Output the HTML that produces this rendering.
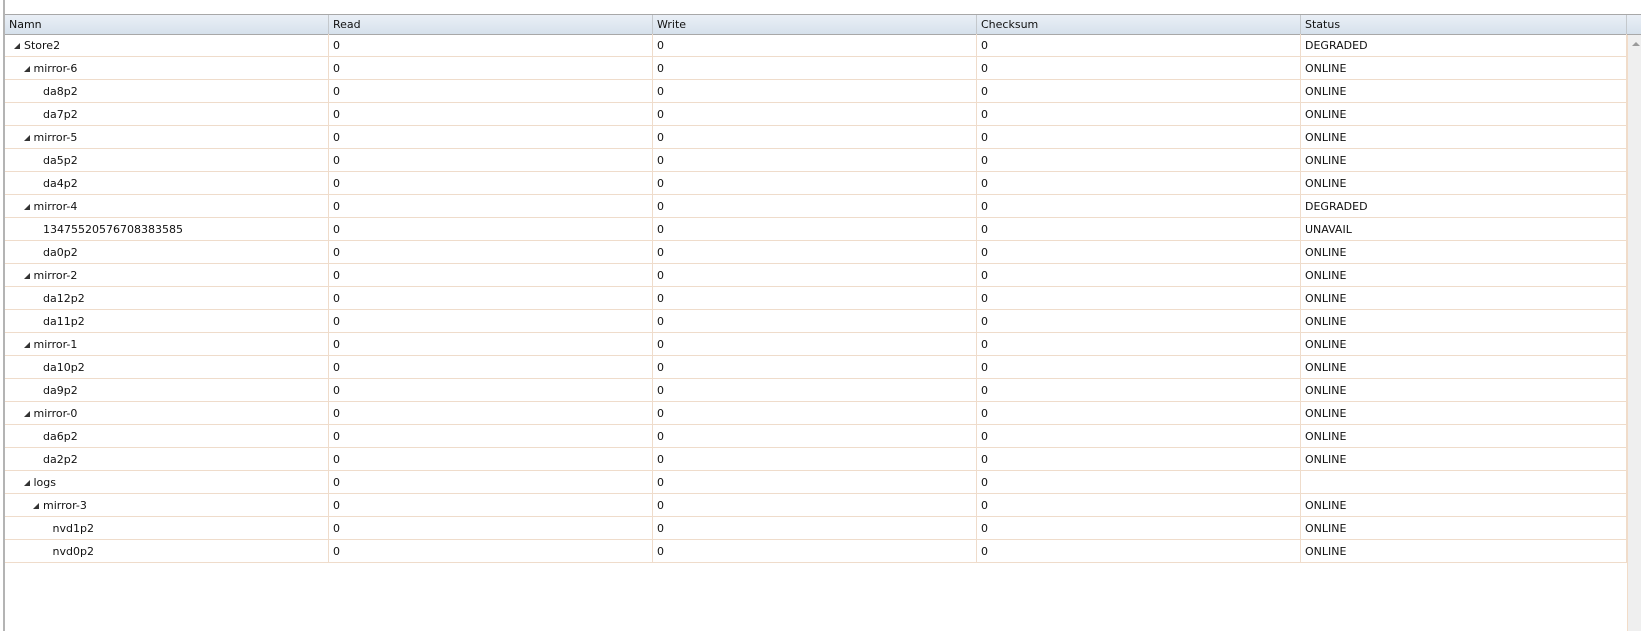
<!DOCTYPE html>
<html><head><meta charset="utf-8"><style>
*{margin:0;padding:0;box-sizing:border-box}
body{width:1641px;height:631px;background:#fff;position:relative;overflow:hidden;font-family:"DejaVu Sans",Verdana,sans-serif;font-size:11px;color:#111}
.lb{position:absolute;left:3px;top:0;width:2px;height:631px;background:#b4b4b4}
.hdr{position:absolute;left:5px;top:14px;width:1636px;height:21px;background:linear-gradient(#eaeff6,#d6e1ec);border-top:1px solid #a8a8a8;border-bottom:1px solid #a8a8a8}
.hdr div{position:absolute;top:0;height:19px;line-height:19px;padding-left:4px;border-right:1px solid #c4c8cc}
.sb{position:absolute;left:1627px;top:35px;width:14px;height:596px;background:#efefef;border-left:1px solid #f2dcc8}
.arr{position:absolute;left:1632px;top:42px;width:0;height:0;border-left:4px solid transparent;border-right:4px solid transparent;border-bottom:4px solid #9a9a9a}
.row{position:absolute;left:5px;width:1622px;height:23px;border-bottom:1px solid #efdccb}
.row div{position:absolute;top:0;height:22px;line-height:23px;padding-left:4px;border-right:1px solid #efdccb}
.t{display:inline-block;width:0;height:0;border-left:6px solid transparent;border-bottom:6px solid #333;margin-right:4px;vertical-align:0px}
</style></head><body>
<div class="lb"></div>
<div class="hdr">
<div style="left:0;width:324px">Namn</div>
<div style="left:324px;width:324px">Read</div>
<div style="left:648px;width:324px">Write</div>
<div style="left:972px;width:324px">Checksum</div>
<div style="left:1296px;width:326px">Status</div>
</div>
<div class="sb"></div><div class="arr"></div>
<div id="rows"></div>
<script>
var d=[[0,1,"Store2","DEGRADED"],[1,1,"mirror-6","ONLINE"],[2,0,"da8p2","ONLINE"],[2,0,"da7p2","ONLINE"],[1,1,"mirror-5","ONLINE"],[2,0,"da5p2","ONLINE"],[2,0,"da4p2","ONLINE"],[1,1,"mirror-4","DEGRADED"],[2,0,"13475520576708383585","UNAVAIL"],[2,0,"da0p2","ONLINE"],[1,1,"mirror-2","ONLINE"],[2,0,"da12p2","ONLINE"],[2,0,"da11p2","ONLINE"],[1,1,"mirror-1","ONLINE"],[2,0,"da10p2","ONLINE"],[2,0,"da9p2","ONLINE"],[1,1,"mirror-0","ONLINE"],[2,0,"da6p2","ONLINE"],[2,0,"da2p2","ONLINE"],[1,1,"logs",""],[2,1,"mirror-3","ONLINE"],[3,0,"nvd1p2","ONLINE"],[3,0,"nvd0p2","ONLINE"]];
var h="";
d.forEach(function(r,i){
var pad=(r[1]?9+9.5*r[0]:19+9.5*r[0]);
h+='<div class="row" style="top:'+(34+23*i)+'px"><div style="left:0;width:324px;padding-left:'+pad+'px">'+(r[1]?'<span class="t"></span>':'')+r[2]+'</div><div style="left:324px;width:324px">0</div><div style="left:648px;width:324px">0</div><div style="left:972px;width:324px">0</div><div style="left:1296px;width:326px">'+r[3]+'</div></div>';
});
document.getElementById("rows").innerHTML=h;
</script>
</body></html>
